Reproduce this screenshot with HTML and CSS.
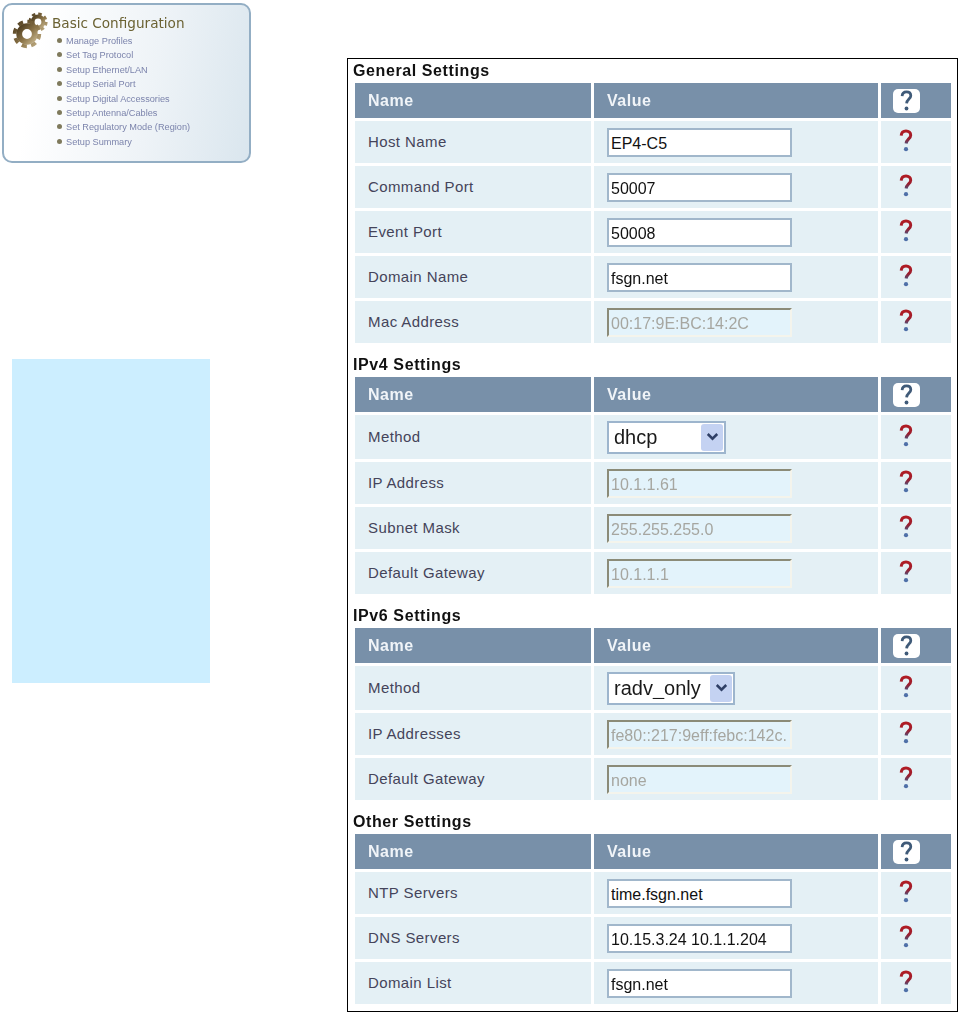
FILE: index.html
```html
<!DOCTYPE html>
<html lang="en">
<head>
<meta charset="utf-8">
<title>Basic Configuration</title>
<link rel="stylesheet" href="styles.css">
</head>
<body>
<svg class="defs" width="0" height="0" aria-hidden="true">
  <defs>
    <linearGradient id="brass" x1="0" y1="0" x2="1" y2="1">
      <stop offset="0" stop-color="#4d3c20"/><stop offset=".55" stop-color="#8a7347"/><stop offset="1" stop-color="#c2b088"/>
    </linearGradient>
    <linearGradient id="qred" x1="0" y1="0" x2="0" y2="1">
      <stop offset="0" stop-color="#b01c24"/><stop offset=".6" stop-color="#9c1c2c"/><stop offset="1" stop-color="#5a4a70"/>
    </linearGradient>
    <symbol id="q" viewBox="0 0 14 24">
      <path d="M2.200 6.600C2.400 3.600 4.400 2 7 2c2.800 0 4.700 1.700 4.700 4.200 0 3.400-4.200 4-4.600 8.300" fill="none" stroke="url(#qred)" stroke-width="3"/>
      <circle cx="7" cy="20.200" r="2.100" fill="#4f70a8"/>
    </symbol>
    <symbol id="qh" viewBox="0 0 14 24">
      <path d="M2.200 6.600C2.400 3.600 4.400 2 7 2c2.800 0 4.700 1.700 4.700 4.200 0 3.400-4.200 4-4.600 8.300" fill="none" stroke="#3f5a78" stroke-width="3"/>
      <circle cx="7" cy="20.200" r="2.100" fill="#3f5a78"/>
    </symbol>
    <symbol id="chev" viewBox="0 0 10 8">
      <path d="M1.200 1.600 5 5.400 8.800 1.600" fill="none" stroke="#2f3f66" stroke-width="2"/>
    </symbol>
  </defs>
</svg>
<div class="page">
  <aside class="side">
    <nav class="card">
      <svg class="gears" width="38" height="38" viewBox="0 0 38 38" aria-hidden="true">
        <g fill="none" stroke="url(#brass)">
          <circle cx="26" cy="11" r="5.400" stroke-width="4"/>
          <circle cx="26" cy="11" r="8.200" stroke-width="2.800" stroke-dasharray="3.500 2.940"/>
          <circle cx="15" cy="23" r="7.800" stroke-width="5.800"/>
          <circle cx="15" cy="23" r="12.300" stroke-width="3.800" stroke-dasharray="5.300 4.360"/>
        </g>
      </svg>
      <div class="menu">
        <h2 class="menu-title">Basic Configuration</h2>
        <ul class="menu-list">
          <li>Manage Profiles</li>
          <li>Set Tag Protocol</li>
          <li>Setup Ethernet/LAN</li>
          <li>Setup Serial Port</li>
          <li>Setup Digital Accessories</li>
          <li>Setup Antenna/Cables</li>
          <li>Set Regulatory Mode (Region)</li>
          <li>Setup Summary</li>
        </ul>
      </div>
    </nav>
    <div class="bluebox"></div>
  </aside>

  <main class="frame">
    <section class="group">
      <h3 class="group-title">General Settings</h3>
      <div class="grid">
        <div class="hd">Name</div><div class="hd">Value</div><div class="hd hd-help"><span class="helpbtn"><svg width="13" height="22"><use href="#qh"/></svg></span></div>
        <div class="lbl">Host Name</div><div class="val"><input class="field" value="EP4-C5"></div><div class="hlp"><svg width="14" height="24"><use href="#q"/></svg></div>
        <div class="lbl">Command Port</div><div class="val"><input class="field" value="50007"></div><div class="hlp"><svg width="14" height="24"><use href="#q"/></svg></div>
        <div class="lbl">Event Port</div><div class="val"><input class="field" value="50008"></div><div class="hlp"><svg width="14" height="24"><use href="#q"/></svg></div>
        <div class="lbl">Domain Name</div><div class="val"><input class="field" value="fsgn.net"></div><div class="hlp"><svg width="14" height="24"><use href="#q"/></svg></div>
        <div class="lbl">Mac Address</div><div class="val"><input class="field off" disabled value="00:17:9E:BC:14:2C"></div><div class="hlp"><svg width="14" height="24"><use href="#q"/></svg></div>
      </div>
    </section>
    <section class="group">
      <h3 class="group-title">IPv4 Settings</h3>
      <div class="grid grid-sel">
        <div class="hd">Name</div><div class="hd">Value</div><div class="hd hd-help"><span class="helpbtn"><svg width="13" height="22"><use href="#qh"/></svg></span></div>
        <div class="lbl">Method</div><div class="val"><span class="pick pick-s"><select class="sel"><option>dhcp</option></select><span class="arrow"><svg width="13" height="10"><use href="#chev"/></svg></span></span></div><div class="hlp"><svg width="14" height="24"><use href="#q"/></svg></div>
        <div class="lbl">IP Address</div><div class="val"><input class="field off" disabled value="10.1.1.61"></div><div class="hlp"><svg width="14" height="24"><use href="#q"/></svg></div>
        <div class="lbl">Subnet Mask</div><div class="val"><input class="field off" disabled value="255.255.255.0"></div><div class="hlp"><svg width="14" height="24"><use href="#q"/></svg></div>
        <div class="lbl">Default Gateway</div><div class="val"><input class="field off" disabled value="10.1.1.1"></div><div class="hlp"><svg width="14" height="24"><use href="#q"/></svg></div>
      </div>
    </section>
    <section class="group">
      <h3 class="group-title">IPv6 Settings</h3>
      <div class="grid grid-sel">
        <div class="hd">Name</div><div class="hd">Value</div><div class="hd hd-help"><span class="helpbtn"><svg width="13" height="22"><use href="#qh"/></svg></span></div>
        <div class="lbl">Method</div><div class="val"><span class="pick pick-l"><select class="sel"><option>radv_only</option></select><span class="arrow"><svg width="13" height="10"><use href="#chev"/></svg></span></span></div><div class="hlp"><svg width="14" height="24"><use href="#q"/></svg></div>
        <div class="lbl">IP Addresses</div><div class="val"><input class="field off" disabled value="fe80::217:9eff:febc:142c."></div><div class="hlp"><svg width="14" height="24"><use href="#q"/></svg></div>
        <div class="lbl">Default Gateway</div><div class="val"><input class="field off" disabled value="none"></div><div class="hlp"><svg width="14" height="24"><use href="#q"/></svg></div>
      </div>
    </section>
    <section class="group">
      <h3 class="group-title">Other Settings</h3>
      <div class="grid">
        <div class="hd">Name</div><div class="hd">Value</div><div class="hd hd-help"><span class="helpbtn"><svg width="13" height="22"><use href="#qh"/></svg></span></div>
        <div class="lbl">NTP Servers</div><div class="val"><input class="field" value="time.fsgn.net"></div><div class="hlp"><svg width="14" height="24"><use href="#q"/></svg></div>
        <div class="lbl">DNS Servers</div><div class="val"><input class="field" value="10.15.3.24 10.1.1.204"></div><div class="hlp"><svg width="14" height="24"><use href="#q"/></svg></div>
        <div class="lbl">Domain List</div><div class="val"><input class="field" value="fsgn.net"></div><div class="hlp"><svg width="14" height="24"><use href="#q"/></svg></div>
      </div>
    </section>
  </main>
</div>
</body>
</html>
```

FILE: styles.css
```css
* { box-sizing: border-box; }
html, body { margin: 0; padding: 0; background: #fff; }
body { width: 958px; height: 1012px; overflow: hidden; font-family: "Liberation Sans", Arial, sans-serif; color: #222; }
.defs { display: block; height: 0; }
.page { display: flex; align-items: flex-start; }

.side { width: 347px; flex: none; padding: 3px 0 0 2px; }
.card {
  width: 249px; height: 160px; display: flex; padding: 6px 0 0 8px;
  border: 2px solid #93aec4; border-radius: 10px;
  background: linear-gradient(100deg, #ffffff 15%, #eef3f7 60%, #dae6ee 100%);
  filter: blur(.35px);
}
.gears { flex: none; }
.menu-title { margin: 3px 0 0 2px; font: 400 13.600px/18px "DejaVu Sans", sans-serif; color: #6b6233; white-space: nowrap; }
.menu-list { list-style: none; margin: 2px 0 0 7px; padding: 0; font-size: 9.200px; line-height: 14.400px; color: #7c84ac; }
.menu-list li { position: relative; padding-left: 9px; white-space: nowrap; }
.menu-list li::before { content: ""; position: absolute; left: 0; top: 4px; width: 5px; height: 5px; border-radius: 50%; background: #7f7a5c; }
.bluebox { width: 198px; height: 324px; margin: 196px 0 0 10px; background: #cceeff; }

.frame { width: 611px; height: 954px; margin-top: 58px; padding: 2px 6px 0 5px; border: 1px solid #000; }
.group { filter: blur(.3px); }
.group + .group { margin-top: 12px; }
.group-title { margin: 0; font-size: 16px; line-height: 19px; font-weight: 700; color: #111; letter-spacing: .6px; }
.grid { display: grid; grid-template-columns: 236px 284px 70px; grid-template-rows: 35px; grid-auto-rows: 42px; gap: 3px; margin: 3px 0 0 2px; }
.grid-sel { grid-template-rows: 35px 44px; }
.hd { height: 35px; display: flex; align-items: center; padding-left: 13px; background: #7890a9; color: #f0f4f8; font-size: 16px; font-weight: 700; letter-spacing: .5px; }
.hd-help { padding-left: 12px; }
.helpbtn { width: 27px; height: 24px; border-radius: 5px; background: #fff; display: flex; align-items: center; justify-content: center; }
.lbl, .val, .hlp { background: #e4f0f5; display: flex; align-items: center; }
.lbl { padding: 0 0 2px 13px; font-size: 15px; color: #44445a; letter-spacing: .4px; white-space: nowrap; }
.val { padding-left: 13px; }
.hlp { padding-left: 18px; }
.hlp svg { margin-top: -2px; }
.field { width: 185px; height: 29px; padding: 3px 2px 0; border: 2px solid #a1b7cb; background: #fff; font: 16px "Liberation Sans", Arial, sans-serif; color: #111; outline: none; }
.field.off { border-color: #8b8b78 #f4f4ec #f4f4ec #8b8b78; background: #e3f3fb; color: #a6a6a0; }
.pick { position: relative; display: block; height: 33px; }
.pick-s { width: 119px; }
.pick-l { width: 128px; }
.sel { appearance: none; -webkit-appearance: none; width: 100%; height: 100%; padding: 0 0 0 5px; border: 2px solid #9db5cd; border-radius: 0; background: #fff; font: 20px "Liberation Sans", Arial, sans-serif; color: #1a1a1a; }
.arrow { position: absolute; right: 3px; top: 3px; width: 22px; height: 27px; border-radius: 3px; background: #c4d2f2; display: flex; align-items: center; justify-content: center; }
```
